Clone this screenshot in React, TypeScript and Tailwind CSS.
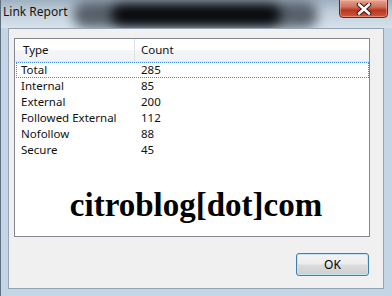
const rows = [
  { type: "Total", count: 285 },
  { type: "Internal", count: 85 },
  { type: "External", count: 200 },
  { type: "Followed External", count: 112 },
  { type: "Nofollow", count: 88 },
  { type: "Secure", count: 45 },
]

function TitleBar() {
  return (
    <div className="relative h-[28px] shrink-0 bg-[linear-gradient(180deg,#9fb0c0_0%,#c3d0dc_45%,#d6e1eb_100%)] overflow-hidden">
      {/* blurred glass behind the caption */}
      <div className="absolute left-[72px] top-[2px] w-[245px] h-[26px] rounded-full bg-[#3c444d] blur-[6px] opacity-80" />
      <div className="absolute left-[110px] top-[5px] w-[170px] h-[20px] rounded-full bg-[#05070a] blur-[6px]" />
      <div className="relative pl-[2px] pt-[4px] text-[12px] leading-[16px] text-[#151515] font-['Noto_Sans',sans-serif]">
        Link Report
      </div>
      <div className="absolute right-[4px] top-[-1px] w-[49px] h-[19px] rounded-b-[4px] border border-[#6b2418] bg-[linear-gradient(180deg,#e3a493_0%,#d0725c_40%,#b8361f_60%,#cf5a3e_100%)] shadow-[inset_0_0_0_1px_rgba(255,200,180,0.45)] flex items-center justify-center">
        <svg width="16" height="12" viewBox="0 0 16 12">
          <path d="M3 1.5 L13 10.5 M13 1.5 L3 10.5" stroke="#3b1510" strokeWidth="4.6" strokeLinecap="round" />
          <path d="M3 1.5 L13 10.5 M13 1.5 L3 10.5" stroke="#ffffff" strokeWidth="2.6" strokeLinecap="round" />
        </svg>
      </div>
    </div>
  )
}

function ListView() {
  return (
    <div className="h-[199px] mr-[13px] border border-[#828790] bg-white flex flex-col font-['Noto_Sans',sans-serif] text-[11.5px] text-[#111]">
      <div className="h-[23px] flex shrink-0 bg-[linear-gradient(180deg,#ffffff_0%,#ffffff_50%,#f4f5f7_51%,#f1f2f4_100%)] border-b border-[#e2e5ea]">
        <div className="w-[120px] pl-[8px] flex items-center border-r border-[#dde1e6]">Type</div>
        <div className="pl-[6px] flex items-center">Count</div>
      </div>
      <div className="flex flex-col">
        {rows.map((r, i) => (
          <div
            key={r.type}
            className={
              i === 0
                ? "h-[16px] flex items-center border border-dotted border-[#3d8ee6] ml-[1px]"
                : "h-[16px] flex items-center border border-transparent ml-[1px]"
            }
          >
            <div className="w-[119px] pl-[4px] leading-[16px]">{r.type}</div>
            <div className="pl-[5px] leading-[16px]">{r.count}</div>
          </div>
        ))}
      </div>
      <div className="mt-[28px] pl-[8px] text-center font-['Liberation_Serif',serif] font-bold text-[33px] leading-[38px] text-black">
        citroblog[dot]com
      </div>
    </div>
  )
}

export default function App() {
  return (
    <div className="w-[392px] h-[296px] flex flex-col overflow-hidden bg-[#c4d5e6] border-l border-[#5f6f80]">
      <TitleBar />
      <div className="flex-1 ml-[7px] mr-[8px] mb-[7px] bg-[#f0f0f0] border border-[#93a4b6] flex flex-col pl-[5px] pt-[9px]">
        <ListView />
        <div className="flex justify-end mt-[16px] mr-[14px]">
          <button className="w-[73px] h-[23px] rounded-[3px] border border-[#3c7fb1] shadow-[inset_0_0_0_1px_#c4e5f6] bg-[linear-gradient(180deg,#f4f4f4_0%,#ececec_48%,#dcdcdc_52%,#cfcfcf_100%)] text-[12px] text-black font-['Noto_Sans',sans-serif]">
            OK
          </button>
        </div>
      </div>
    </div>
  )
}
